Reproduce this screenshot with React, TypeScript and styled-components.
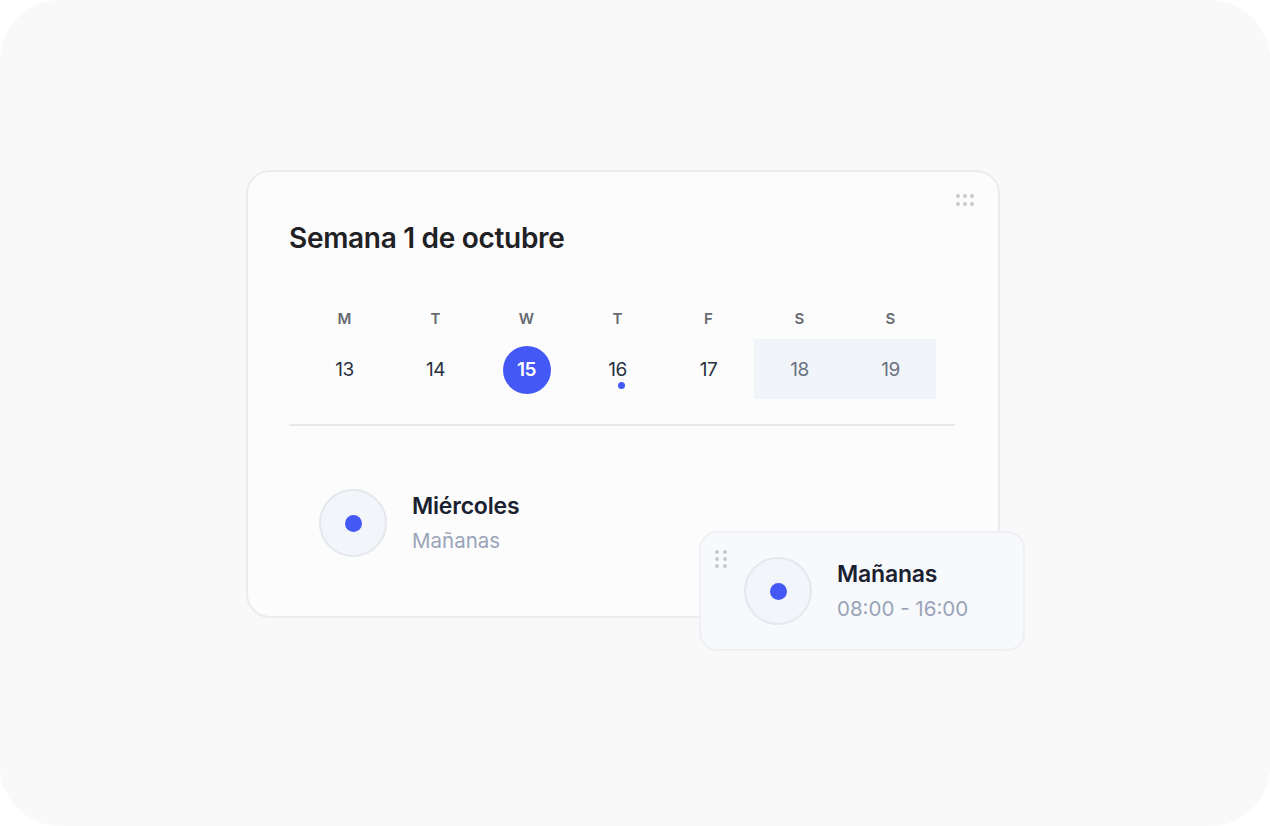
import React from "react";
import styled, { createGlobalStyle } from "styled-components";

const GlobalStyle = createGlobalStyle`
  html, body {
    margin: 0;
    padding: 0;
    background: #ffffff;
    font-family: Inter, "Noto Sans", sans-serif;
  }
`;

const Frame = styled.div`
  width: 1270px;
  height: 826px;
  box-sizing: border-box;
  border-radius: 60px;
  background: #f9f9fa;
  padding: 170px 0 0 246px;
`;

const Card = styled.div`
  position: relative;
  width: 754px;
  height: 448px;
  box-sizing: border-box;
  border-radius: 24px;
  border: 2px solid #ececee;
  background: #fcfcfd;
  padding: 49px 42px 0 41px;
`;

const Title = styled.h1`
  margin: 0;
  font-size: 28px;
  line-height: 34px;
  font-weight: 600;
  letter-spacing: -0.3px;
  color: #1f2124;
`;

const Week = styled.div`
  margin: 48px 0 0 10px;
  width: 637px;
  display: grid;
  grid-template-columns: repeat(7, 91px);
  grid-template-rows: 30px 60px;
  row-gap: 6px;
`;

const DayLabel = styled.div`
  display: flex;
  align-items: center;
  justify-content: center;
  font-size: 15px;
  font-weight: 600;
  color: #666a70;
`;

const DayCell = styled.div<{ $weekend?: boolean }>`
  position: relative;
  display: flex;
  align-items: center;
  justify-content: center;
  background: ${(p) => (p.$weekend ? "#f1f4f8" : "transparent")};
`;

const DayNumber = styled.span<{ $active?: boolean; $weekend?: boolean }>`
  width: 48px;
  height: 48px;
  margin-top: 1px;
  border-radius: 50%;
  display: flex;
  align-items: center;
  justify-content: center;
  font-size: 19px;
  letter-spacing: -0.5px;
  font-weight: ${(p) => (p.$active ? 600 : 400)};
  color: ${(p) => (p.$active ? "#ffffff" : p.$weekend ? "#6b7280" : "#283140")};
  background: ${(p) => (p.$active ? "#4458f6" : "transparent")};
`;

const EventDot = styled.span`
  position: absolute;
  left: 50%;
  top: 43px;
  width: 7px;
  height: 7px;
  border-radius: 50%;
  background: #4458f6;
`;

const Divider = styled.div`
  margin-top: 25px;
  width: 666px;
  height: 2px;
  background: #e6e8ec;
`;

const ShiftRow = styled.div<{ $indent?: number }>`
  display: flex;
  align-items: center;
  gap: 25px;
  padding-left: ${(p) => p.$indent ?? 0}px;
`;

const RowWrap = styled.div`
  margin-top: 63px;
`;

const Ring = styled.div`
  width: 64px;
  height: 64px;
  flex: none;
  border-radius: 50%;
  background: #f2f5f9;
  border: 2px solid #e4e7ec;
  display: flex;
  align-items: center;
  justify-content: center;
`;

const RingDot = styled.span`
  width: 17px;
  height: 17px;
  border-radius: 50%;
  background: #4458f6;
`;

const ShiftText = styled.div`
  display: flex;
  flex-direction: column;
  gap: 8px;
`;

const ShiftTitle = styled.div`
  font-size: 23px;
  line-height: 28px;
  font-weight: 600;
  letter-spacing: -0.2px;
  color: #1a2130;
`;

const ShiftSub = styled.div`
  font-size: 20.5px;
  line-height: 26px;
  color: #9aa4b8;
`;

const DotGrid = styled.div<{ $cols: number }>`
  position: absolute;
  display: grid;
  grid-template-columns: repeat(${(p) => p.$cols}, 4px);
  gap: 3px 3px;
`;

const Dot = styled.span`
  width: 4px;
  height: 4px;
  border-radius: 50%;
  background: #c7c9cd;
`;

const CornerHandle = styled(DotGrid)`
  top: 22px;
  right: 24px;
  gap: 4px 3px;
`;

const FloatCard = styled.div`
  position: absolute;
  left: 451px;
  top: 359px;
  width: 326px;
  height: 120px;
  box-sizing: border-box;
  border-radius: 18px;
  border: 2px solid #eef0f3;
  background: #f7f9fc;
  display: flex;
  align-items: center;
  padding-left: 43px;
`;

const SideHandle = styled(DotGrid)`
  top: 17px;
  left: 14px;
  gap: 3px 4px;
`;

const days = [
  { l: "M", n: 13 },
  { l: "T", n: 14 },
  { l: "W", n: 15, active: true },
  { l: "T", n: 16, dot: true },
  { l: "F", n: 17 },
  { l: "S", n: 18, weekend: true },
  { l: "S", n: 19, weekend: true },
];

const Dots: React.FC<{ count: number }> = ({ count }) => (
  <>
    {Array(count)
      .fill(0)
      .map((_, i) => (
        <Dot key={i} />
      ))}
  </>
);

export default function App() {
  return (
    <>
      <GlobalStyle />
      <Frame>
        <Card>
          <CornerHandle $cols={3}>
            <Dots count={6} />
          </CornerHandle>
          <Title>Semana 1 de octubre</Title>
          <Week>
            {days.map((d, i) => (
              <DayLabel key={`l-${i}`}>{d.l}</DayLabel>
            ))}
            {days.map((d, i) => (
              <DayCell key={`n-${i}`} $weekend={d.weekend}>
                <DayNumber $active={d.active} $weekend={d.weekend}>
                  {d.n}
                </DayNumber>
                {d.dot && <EventDot />}
              </DayCell>
            ))}
          </Week>
          <Divider />
          <RowWrap>
            <ShiftRow $indent={30}>
              <Ring>
                <RingDot />
              </Ring>
              <ShiftText>
                <ShiftTitle>Miércoles</ShiftTitle>
                <ShiftSub>Mañanas</ShiftSub>
              </ShiftText>
            </ShiftRow>
          </RowWrap>
          <FloatCard>
            <SideHandle $cols={2}>
              <Dots count={6} />
            </SideHandle>
            <ShiftRow>
              <Ring>
                <RingDot />
              </Ring>
              <ShiftText>
                <ShiftTitle>Mañanas</ShiftTitle>
                <ShiftSub>08:00 - 16:00</ShiftSub>
              </ShiftText>
            </ShiftRow>
          </FloatCard>
        </Card>
      </Frame>
    </>
  );
}
